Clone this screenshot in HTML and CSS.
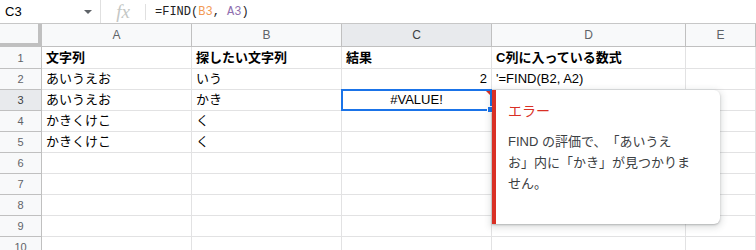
FILE: index.html
```html
<!DOCTYPE html>
<html lang="ja">
<head>
  <meta charset="UTF-8">
  <title>FIND エラー</title>
  <link rel="stylesheet" href="styles.css">
</head>
<body>
  <!-- Formula bar -->
  <div class="formula-bar">
    <div class="name-box">
      <span>C3</span>
      <span class="caret"></span>
    </div>
    <div class="fx">fx</div>
    <div class="formula">=FIND(<span class="ref-1">B3</span>, <span class="ref-2">A3</span>)</div>
  </div>

  <!-- Sheet grid -->
  <div class="sheet">
    <div class="grid">
      <div class="corner"></div>
      <div class="col-head">A</div>
      <div class="col-head">B</div>
      <div class="col-head active">C</div>
      <div class="col-head">D</div>
      <div class="col-head">E</div>

      <div class="row-head">1</div>
      <div class="cell bold">文字列</div>
      <div class="cell bold">探したい文字列</div>
      <div class="cell bold">結果</div>
      <div class="cell bold">C列に入っている数式</div>
      <div class="cell"></div>

      <div class="row-head">2</div>
      <div class="cell">あいうえお</div>
      <div class="cell">いう</div>
      <div class="cell num">2</div>
      <div class="cell">'=FIND(B2, A2)</div>
      <div class="cell"></div>

      <div class="row-head active">3</div>
      <div class="cell">あいうえお</div>
      <div class="cell">かき</div>
      <div class="cell center selected">#VALUE!<span class="err-flag"></span><span class="handle"></span></div>
      <div class="cell"></div>
      <div class="cell"></div>

      <div class="row-head">4</div>
      <div class="cell">かきくけこ</div>
      <div class="cell">く</div>
      <div class="cell"></div>
      <div class="cell"></div>
      <div class="cell"></div>

      <div class="row-head">5</div>
      <div class="cell">かきくけこ</div>
      <div class="cell">く</div>
      <div class="cell"></div>
      <div class="cell"></div>
      <div class="cell"></div>

      <div class="row-head">6</div>
      <div class="cell"></div><div class="cell"></div><div class="cell"></div><div class="cell"></div><div class="cell"></div>
      <div class="row-head">7</div>
      <div class="cell"></div><div class="cell"></div><div class="cell"></div><div class="cell"></div><div class="cell"></div>
      <div class="row-head">8</div>
      <div class="cell"></div><div class="cell"></div><div class="cell"></div><div class="cell"></div><div class="cell"></div>
      <div class="row-head">9</div>
      <div class="cell"></div><div class="cell"></div><div class="cell"></div><div class="cell"></div><div class="cell"></div>
      <div class="row-head">10</div>
      <div class="cell"></div><div class="cell"></div><div class="cell"></div><div class="cell"></div><div class="cell"></div>
    </div>

    <!-- Error tooltip -->
    <div class="error-tip">
      <div class="error-title">エラー</div>
      <p class="error-text">FIND の評価で、「あいうえお」内に「かき」が見つかりません。</p>
    </div>
  </div>
</body>
</html>
```

FILE: styles.css
```css
/* General */
body {
  margin: 0;
  font-family: 'Liberation Sans', 'Noto Sans CJK JP', sans-serif;
  color: #000;
  background-color: #fff;
  overflow: hidden;
  text-spacing-trim: space-all;
}

/* Formula bar */
.formula-bar {
  display: flex;
  align-items: center;
  height: 23px;
  border-bottom: 1px solid #c7c7c7;
}

.name-box {
  display: flex;
  align-items: center;
  justify-content: space-between;
  width: 101px;
  height: 23px;
  padding: 0 7px 0 5px;
  border-right: 1px solid #e0e0e0;
  font-size: 13px;
  box-sizing: border-box;
}

.caret {
  width: 0;
  height: 0;
  border-left: 4px solid transparent;
  border-right: 4px solid transparent;
  border-top: 4px solid #5f6368;
  margin-right: 1px;
}

.fx {
  width: 44px;
  height: 16px;
  line-height: 16px;
  text-align: center;
  font-family: 'Liberation Serif', serif;
  font-style: italic;
  font-size: 19px;
  color: #c4c7c5;
  border-right: 1px solid #e0e0e0;
}

.formula {
  padding-left: 9px;
  font-family: 'Liberation Mono', monospace;
  font-size: 12px;
  color: #222;
}

.ref-1 {
  color: #f29a55;
}

.ref-2 {
  color: #8f6fb0;
}

/* Sheet */
.sheet {
  position: relative;
}

.grid {
  display: grid;
  grid-template-columns: 42px 150px 150px 150px 194px 70px;
  grid-template-rows: 23px 22px;
  grid-auto-rows: 21px;
}

.corner {
  background-color: #f8f9fa;
  border-right: 4px solid #c0c0c0;
  border-bottom: 4px solid #c0c0c0;
  box-sizing: border-box;
}

.col-head,
.row-head {
  display: flex;
  align-items: center;
  justify-content: center;
  background-color: #f8f9fa;
  color: #5f6368;
  font-size: 12px;
  box-sizing: border-box;
  border-right: 1px solid #c0c0c0;
  border-bottom: 1px solid #c0c0c0;
}

.col-head.active,
.row-head.active {
  background-color: #e8eaed;
  color: #3c4043;
}

.row-head {
  font-size: 11px;
}

.cell {
  display: flex;
  align-items: flex-end;
  padding: 0 4px 2px;
  font-size: 13px;
  line-height: 17px;
  white-space: nowrap;
  box-sizing: border-box;
  border-right: 1px solid #e2e2e3;
  border-bottom: 1px solid #e2e2e3;
}

.cell.bold {
  font-weight: bold;
}

.cell.num {
  justify-content: flex-end;
}

.cell.center {
  justify-content: center;
}

/* Selected cell */
.selected {
  position: relative;
}

.selected::after {
  content: '';
  position: absolute;
  left: -1px;
  top: -1px;
  right: -1px;
  bottom: -1px;
  border: 2px solid #1a73e8;
}

.err-flag {
  position: absolute;
  top: 0;
  right: 0;
  width: 0;
  height: 0;
  border-left: 6px solid transparent;
  border-top: 6px solid #d93025;
}

.handle {
  position: absolute;
  right: -3px;
  bottom: -3px;
  width: 5px;
  height: 5px;
  background-color: #1a73e8;
  border: 1px solid #fff;
  z-index: 1;
}

/* Error tooltip */
.error-tip {
  position: absolute;
  left: 492px;
  top: 66px;
  width: 228px;
  height: 134px;
  padding: 11px 20px 0 12px;
  box-sizing: border-box;
  background-color: #fff;
  border-left: 4px solid #d93025;
  border-radius: 0 6px 6px 0;
  box-shadow: 0 2px 6px 2px rgba(60, 64, 67, 0.15), 0 1px 2px rgba(60, 64, 67, 0.3);
  z-index: 2;
}

.error-title {
  font-size: 14px;
  line-height: 20px;
  color: #d93025;
}

.error-text {
  width: 186px;
  margin: 10px 0 0;
  font-size: 13px;
  line-height: 21px;
  color: #3c4043;
}
```
